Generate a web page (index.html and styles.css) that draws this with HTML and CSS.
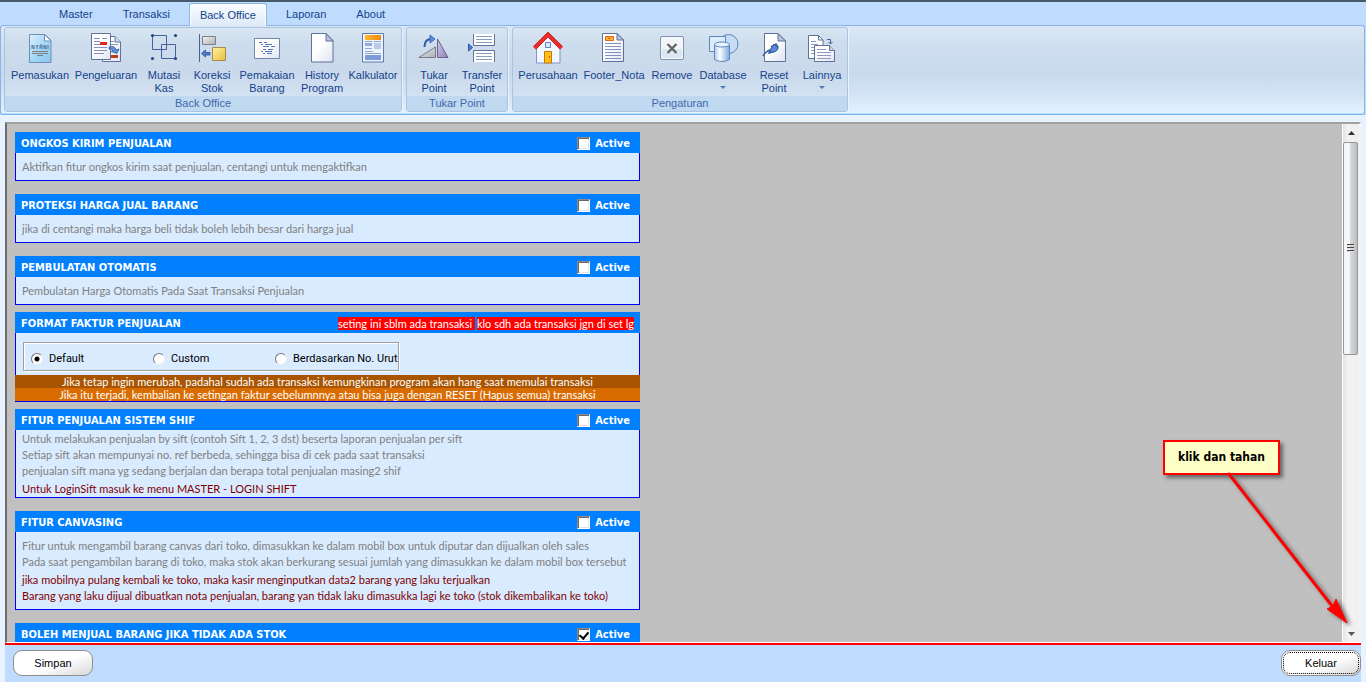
FILE: index.html
```html
<!DOCTYPE html>
<html lang="id">
<head>
<meta charset="utf-8">
<title>Back Office</title>
<link rel="stylesheet" href="styles.css">
</head>
<body>
<svg class="defs" width="0" height="0" aria-hidden="true">
  <defs>
    <linearGradient id="paper" x1="0" y1="0" x2="1" y2="1"><stop offset="0.4" stop-color="#fff"/><stop offset="1" stop-color="#dfe4f3"/></linearGradient>
    <linearGradient id="sky" x1="0" y1="0" x2="1" y2="1"><stop offset="0" stop-color="#dff1ff"/><stop offset="0.5" stop-color="#a5d8f8"/><stop offset="1" stop-color="#8cc4ee"/></linearGradient>
    <linearGradient id="gold" x1="0" y1="0" x2="1" y2="1"><stop offset="0" stop-color="#fff3a0"/><stop offset="1" stop-color="#e6bd3a"/></linearGradient>
    <linearGradient id="orange" x1="0" y1="0" x2="1" y2="0"><stop offset="0" stop-color="#ffb52e"/><stop offset="1" stop-color="#ee8a10"/></linearGradient>
    <linearGradient id="silver" x1="0" y1="0" x2="1" y2="1"><stop offset="0" stop-color="#f4f4f4"/><stop offset="1" stop-color="#a9adb3"/></linearGradient>
    <linearGradient id="violet" x1="0" y1="0" x2="1" y2="1"><stop offset="0" stop-color="#d6cdea"/><stop offset="1" stop-color="#8e80b4"/></linearGradient>
    <linearGradient id="tube" x1="0" y1="0" x2="1" y2="0"><stop offset="0" stop-color="#a8cdf2"/><stop offset="0.35" stop-color="#fff"/><stop offset="1" stop-color="#7ba9dd"/></linearGradient>
  </defs>
</svg>

<header class="ribbon">
  <nav class="tabs">
    <button class="tab">Master</button>
    <button class="tab">Transaksi</button>
    <button class="tab tab-active">Back Office</button>
    <button class="tab">Laporan</button>
    <button class="tab">About</button>
  </nav>
  <div class="groups">
    <section class="group">
      <div class="tools">
        <button class="tool w-l">
          <svg class="icon" viewBox="0 0 32 32"><path d="M5.500 2.500H21l6 6V30.500H5.500z" fill="url(#sky)" stroke="#6e8fb4"/><path d="M20.500 2.500v6.500h6.500z" fill="#fff" stroke="#6e8fb4"/><path d="M8 17v-4l2 4v-4m2 0 1 2 1-2m-1 2v2m3 0v-4h2v2h-2m2 0v2m2 0v-4l2 4v-4m2 0v4" fill="none" stroke="#567a9c"/><path d="M8 19.500h16M8 21.500h16M13 23.500h6" stroke="#7d7a80"/></svg>
          <span>Pemasukan</span></button>
        <button class="tool w-xl">
          <svg class="icon" viewBox="0 0 32 32"><path d="M12.500 4.500H25l5.500 5.500v19.500h-18z" fill="url(#paper)" stroke="#60719a"/><path d="M25 4.500V10h5.500" fill="#d5dcf0" stroke="#60719a"/><path d="M21 9.500h3M21 12.500h7" stroke="#8c97b8"/><path d="M21 23h7v3h-7z" fill="#c43c12"/><path d="M1.500 1.500h19v26h-19z" fill="url(#paper)" stroke="#60719a"/><path d="M4 6.500h6M12 6.500h5M4 9.500h6M4 12.500h6M4 15.500h13M4 18.500h13M4 21.500h10" stroke="#8390bd"/><path d="M10 10h7v3h-7z" fill="#e2281c"/><path d="M19 15q6-2 7 3l3-1-2 4.500-6-2 2-.5q-1-2-4-2z" fill="#5d8fdc" stroke="#28549c" stroke-width=".7"/></svg>
          <span>Pengeluaran</span></button>
        <button class="tool w-s">
          <svg class="icon" viewBox="0 0 32 32"><path d="M4.500 3.500h14v14h-14zM13.500 12.500h14v14h-14z" fill="none" stroke="#46629a"/><g fill="#24478c"><circle cx="4.500" cy="3.500" r="1.600"/><circle cx="27.500" cy="3.500" r="1.600"/><circle cx="4.500" cy="26.500" r="1.600"/><circle cx="27.500" cy="26.500" r="1.600"/></g></svg>
          <span>Mutasi<br>Kas</span></button>
        <button class="tool w-s">
          <svg class="icon" viewBox="0 0 32 32"><path d="M3.500 2v28" stroke="#46629a"/><path d="M6.500 4.500h13v8h-13z" fill="url(#silver)" stroke="#7a7d84"/><path d="M16.500 15.500h13v13h-13z" fill="url(#gold)" stroke="#a88a4a"/><path d="m5.500 21.500 4-3.500v2.500h4.500v2.500H9.500V25z" fill="#4a7fd0" stroke="#2a4f98" stroke-width=".8"/></svg>
          <span>Koreksi<br>Stok</span></button>
        <button class="tool w-m">
          <svg class="icon" viewBox="0 0 32 32"><path d="M3.500 6.500h25v20h-25z" fill="url(#paper)" stroke="#7386ac"/><path d="M8 10.500h3M13 10.500h3M10 12.500h2M14 12.500h7M12 14.500h6M20 14.500h4M12 17.500h3M17 17.500h5M10 19.500h2M14 19.500h7M12 21.500h2M16 21.500h5" stroke="#5677a8"/></svg>
          <span>Pemakaian<br>Barang</span></button>
        <button class="tool w-s">
          <svg class="icon" viewBox="0 0 32 32"><path d="M5.500 1.500H20l7 7v21.500H5.500z" fill="url(#paper)" stroke="#60719a"/><path d="M20 1.500V9h7z" fill="#b9c3df" stroke="#60719a"/></svg>
          <span>History<br>Program</span></button>
        <button class="tool w-d">
          <svg class="icon" viewBox="0 0 32 32"><path d="M5.500 1.500h21v28.500h-21z" fill="#eef2fb" stroke="#5f79b0"/><path d="M8 3h16v5H8z" fill="url(#orange)"/><path d="M8 9.500h7M17 9.500h7M8 19.500h8M8 21.500h16" stroke="#8fa6d2"/><path d="M8 11h7v3H8z" fill="#93abd9"/><path d="M17 11h7v6h-7z" fill="#b9caeb"/><path d="M8 16.500h7" stroke="#91a9da"/><path d="M8 23h16v5H8z" fill="#7b9cda"/></svg>
          <span>Kalkulator</span></button>
      </div>
      <h2 class="group-title">Back Office</h2>
    </section>
    <section class="group">
      <div class="tools">
        <button class="tool w-s">
          <svg class="icon" viewBox="0 0 32 32"><path d="M.8 25.500 17.500 15v10.500z" fill="url(#silver)" stroke="#777c88"/><path d="M19.500 7v18.500H30z" fill="url(#violet)" stroke="#6c648e"/><path d="M6.500 15q0-8 7-8" fill="none" stroke="#2d5aa8" stroke-width="2"/><path d="m12 3 5 4-5 4z" fill="#5b90df" stroke="#2d5aa8" stroke-width=".8"/></svg>
          <span>Tukar<br>Point</span></button>
        <button class="tool w-s">
          <svg class="icon" viewBox="0 0 32 32"><path d="M7.500 2v11.500h21V2M7.500 30V18.500h21V30" fill="#fff" stroke="#62729a"/><path d="M10 4.500h16M10 7.500h16M10 10.500h16M10 21.500h16M10 24.500h16M10 27.500h16" stroke="#8d9ac6"/><path d="m2.500 12 4 3.500-4 3.500z" fill="#4c83dc" stroke="#2b539e"/></svg>
          <span>Transfer<br>Point</span></button>
      </div>
      <h2 class="group-title">Tukar Point</h2>
    </section>
    <section class="group">
      <div class="tools">
        <button class="tool w-l">
          <svg class="icon" viewBox="0 0 32 32"><path d="M4.500 31V16L16 4l12 12v15z" fill="#f3f7ff" stroke="#7f95cf"/><path d="M2.500 16 16 2.500 29.500 16" fill="none" stroke="#b81212" stroke-width="4"/><path d="M2.500 16 16 2.500 29.500 16" fill="none" stroke="#f22b26" stroke-width="2.600"/><path d="M13.500 10.500h5v5h-5z" fill="#dce9fc" stroke="#6680bd"/><path d="M12.500 19.500h7V31h-7z" fill="#ffbd16" stroke="#c77908"/><path d="M17.500 24v2" stroke="#a45d00"/></svg>
          <span>Perusahaan</span></button>
        <button class="tool w-xl">
          <svg class="icon" viewBox="0 0 32 32"><path d="M4.500 1.500H19l6.500 6.500v21.500h-21z" fill="url(#paper)" stroke="#60719a"/><path d="M19 1.500V8h6.500z" fill="#b9c3df" stroke="#60719a"/><path d="M7.500 4.500h8v4h-8z" fill="#ffb23c" stroke="#da6a10"/><path d="M10 6.500h3" stroke="#da6a10"/><path d="M7 11.500h16M7 14.500h16M7 17.500h16M7 20.500h16M7 23.500h16M7 26.500h16" stroke="#8390c3"/></svg>
          <span>Footer_Nota</span></button>
        <button class="tool w-s">
          <svg class="icon" viewBox="0 0 32 32"><rect x="4.500" y="4.500" width="23" height="23" rx="1.500" fill="#f2f6fb" stroke="#8492aa"/><path d="M6 17h20v9H6z" fill="#dce7f4"/><path d="m11.500 12 9 9m0-9-9 9" stroke="#666" stroke-width="2.400"/></svg>
          <span>Remove</span></button>
        <button class="tool w-d">
          <svg class="icon" viewBox="0 0 32 32"><circle cx="21.500" cy="12" r="9.500" fill="#c4dcf5" stroke="#5f86bd"/><path d="M2.500 4.500h16v15h-16z" fill="#dcecfb" stroke="#5f86bd"/><path d="M7.500 12.500v15q7.500 4 15 0v-15z" fill="url(#tube)" stroke="#5f86bd"/><ellipse cx="15" cy="12.500" rx="7.500" ry="2.500" fill="#e7f3ff" stroke="#5f86bd"/></svg>
          <span>Database</span><i class="drop"></i></button>
        <button class="tool w-s">
          <svg class="icon" viewBox="0 0 32 32"><path d="M6.500 1.500H20l7.500 7.500v20.500h-21z" fill="url(#paper)" stroke="#60719a"/><path d="M20 1.500V9h7.500z" fill="#b9c3df" stroke="#60719a"/><path d="M5 24q3-5 7-6l-1 3q5-1 9-6l-2-3-5 3" fill="none" stroke="#38619f" stroke-width="1.500"/><path d="m12 18 4-6 4 4q-1 5-8 4z" fill="#5a8bd5" stroke="#32599a"/></svg>
          <span>Reset<br>Point</span></button>
        <button class="tool w-s">
          <svg class="icon" viewBox="0 0 32 32"><path d="M2.500 3.500h10l4.500 4.500v18.500h-14.500z" fill="#fff" stroke="#60719a"/><path d="M12.500 3.500V8H17" fill="none" stroke="#60719a"/><path d="M5 9.500h5M5 12.500h7M5 15.500h3M5 18.500h3M5 21.500h3" stroke="#8d99c3"/><path d="M8.500 13.500h15l5 5v11h-20z" fill="url(#paper)" stroke="#60719a"/><path d="M23.500 13.500v5h5" fill="#cfd6ea" stroke="#60719a"/><path d="M11 17.500h9M11 20.500h14M11 23.500h14M11 26.500h14" stroke="#8d99c3"/><path d="M21 7.500h3.500v4m-2-1.500 2 2 2-2" fill="none" stroke="#4a5f8e"/></svg>
          <span>Lainnya</span><i class="drop"></i></button>
      </div>
      <h2 class="group-title">Pengaturan</h2>
    </section>
  </div>
</header>

<main class="workspace">
  <div class="panel">
    <div class="cards">
      <section class="card">
        <div class="card-head"><h3>ONGKOS KIRIM PENJUALAN</h3><label class="active"><input type="checkbox">Active</label></div>
        <div class="card-body roomy"><p>Aktifkan fitur ongkos kirim saat penjualan, centangi untuk mengaktifkan</p></div>
      </section>
      <section class="card">
        <div class="card-head"><h3>PROTEKSI HARGA JUAL BARANG</h3><label class="active"><input type="checkbox">Active</label></div>
        <div class="card-body roomy"><p>jika di centangi maka harga beli tidak boleh lebih besar dari harga jual</p></div>
      </section>
      <section class="card snug">
        <div class="card-head"><h3>PEMBULATAN OTOMATIS</h3><label class="active"><input type="checkbox">Active</label></div>
        <div class="card-body roomy"><p>Pembulatan Harga Otomatis Pada Saat Transaksi Penjualan</p></div>
      </section>
      <section class="card snug">
        <div class="card-head"><h3>FORMAT FAKTUR PENJUALAN</h3><div class="alerts"><mark>seting ini sblm ada transaksi&nbsp;</mark><mark>klo sdh ada transaksi jgn di set lg</mark></div></div>
        <div class="card-body format">
          <fieldset class="choices">
            <label><input type="radio" name="format" checked>Default</label>
            <label><input type="radio" name="format">Custom</label>
            <label><input type="radio" name="format">Berdasarkan No. Urut</label>
          </fieldset>
          <p class="warn warn-dark">Jika tetap ingin merubah, padahal sudah ada transaksi kemungkinan program akan hang saat memulai transaksi</p>
          <p class="warn">Jika itu terjadi, kembalian ke setingan faktur sebelumnnya atau bisa juga dengan RESET (Hapus semua) transaksi</p>
        </div>
      </section>
      <section class="card">
        <div class="card-head"><h3>FITUR PENJUALAN SISTEM SHIF</h3><label class="active"><input type="checkbox">Active</label></div>
        <div class="card-body">
          <p>Untuk melakukan penjualan by sift (contoh Sift 1, 2, 3 dst) beserta laporan penjualan per sift</p>
          <p>Setiap sift akan mempunyai no. ref berbeda, sehingga bisa di cek pada saat transaksi</p>
          <p>penjualan sift mana yg sedang berjalan dan berapa total penjualan masing2 shif</p>
          <div class="note"><p>Untuk LoginSift masuk ke menu MASTER - LOGIN SHIFT</p></div>
        </div>
      </section>
      <section class="card">
        <div class="card-head"><h3>FITUR CANVASING</h3><label class="active"><input type="checkbox">Active</label></div>
        <div class="card-body roomy">
          <p>Fitur untuk mengambil barang canvas dari toko, dimasukkan ke dalam mobil box untuk diputar dan dijualkan oleh sales</p>
          <p>Pada saat pengambilan barang di toko, maka stok akan berkurang sesuai jumlah yang dimasukkan ke dalam mobil box tersebut</p>
          <div class="note"><p>jika mobilnya pulang kembali ke toko, maka kasir menginputkan data2 barang yang laku terjualkan</p>
          <p>Barang yang laku dijual dibuatkan nota penjualan, barang yan tidak laku dimasukka lagi ke toko (stok dikembalikan ke toko)</p></div>
        </div>
      </section>
      <section class="card">
        <div class="card-head"><h3>BOLEH MENJUAL BARANG JIKA TIDAK ADA STOK</h3><label class="active"><input type="checkbox" checked>Active</label></div>
        <div class="card-body roomy"></div>
      </section>
    </div>
    <div class="scrollbar">
      <button class="step" aria-label="Scroll up"><svg width="7" height="4" viewBox="0 0 7 4"><path d="M0 4 3.500 0 7 4z" fill="#333"/></svg></button>
      <div class="track"><div class="thumb"><i></i><i></i><i></i></div></div>
      <button class="step" aria-label="Scroll down"><svg width="7" height="4" viewBox="0 0 7 4"><path d="M0 0h7L3.500 4z" fill="#555"/></svg></button>
    </div>
  </div>
  <div class="callout">klik dan tahan</div>
  <svg class="arrow" width="130" height="160" viewBox="0 0 130 160" aria-hidden="true"><path d="M3 3 110 140" stroke="red" stroke-width="3" stroke-linecap="round"/><path d="m121 152-20-14 6-3 3-7z" fill="red" stroke="red"/></svg>
</main>

<footer class="actions">
  <button class="pill">Simpan</button>
  <button class="pill pill-focus">Keluar</button>
</footer>
</body>
</html>
```
FILE: styles.css
```css
* { box-sizing: border-box; }

body {
  margin: 0;
  height: 100vh;
  display: flex;
  flex-direction: column;
  overflow: hidden;
  background: #e8f3ff;
  font: 11px/16px "Liberation Sans", Arial, sans-serif;
}

.defs { position: absolute; }
h2, h3, p { margin: 0; font: inherit; }
button { margin: 0; padding: 0; border: 0; background: none; font: inherit; color: inherit; }

/* Ribbon */
.ribbon {
  flex: none;
  border-top: 2px solid #45586c;
  background: #bfdcff;
  color: #15428b;
  line-height: 13px;
}

.tabs {
  display: flex;
  height: 23px;
  padding-left: 44px;
}

.tab { padding: 1px 15px 0; }

.tab-active {
  position: relative;
  margin: 1px 4px -1px;
  padding: 0 10px;
  border: 1px solid #8db2e3;
  border-bottom: 0;
  border-radius: 3px 3px 0 0;
  background: linear-gradient(#fafdff, #dce9f7);
  box-shadow: inset 1px 1px #fff, inset -1px 0 #fff;
}

.groups {
  display: flex;
  gap: 4px;
  margin-right: 1px;
  padding: 1px 3px 2px;
  border: 1px solid #8db2e3;
  border-radius: 3px;
  border-bottom-color: #7fb0ee;
  background: linear-gradient(#dbe7f5 0, #cfdff0 20px, #c9daee 55%, #d5e5f7 80%, #e4f2ff);
  box-shadow: inset 0 -1px #b4e4ff;
}

.group {
  border: 1px solid #a9c5e4;
  border-radius: 3px;
  background: linear-gradient(#d9e5f2 0, #cddded 15px, #c9d9eb 45px, #d9e8f7);
  box-shadow: 1px 1px #eaf4ff;
}

.tools {
  display: flex;
  height: 68px;
  padding: 4px 1px 0 3px;
}

.tool {
  display: flex;
  flex-direction: column;
  align-items: center;
  text-align: center;
  white-space: nowrap;
}

.w-s { width: 48px; }
.w-d { width: 54px; }
.w-m { width: 62px; }
.w-l { width: 64px; }
.w-xl { width: 68px; }

.icon {
  width: 32px;
  height: 32px;
  margin-bottom: 5px;
}

.drop {
  margin-top: 4px;
  border: 3px solid transparent;
  border-top-color: #5379b5;
}

.group-title {
  height: 15px;
  background: #c1d8f1;
  color: #3e6aaa;
  line-height: 15px;
  text-align: center;
}

/* Settings panel */
.workspace {
  position: relative;
  flex: 1;
  min-height: 0;
  margin: 7px 5px 0;
  border-bottom: 2px solid red;
}

.panel {
  display: flex;
  height: 100%;
  border: 2px solid;
  border-color: #a0a0a0 #f4f4f4 #fff #6d6d6d;
  border-bottom-width: 1px;
  background: #c0c0c0;
}

.cards {
  flex: 1;
  overflow: hidden;
  padding: 8px;
  font-family: Lato, sans-serif;
}

.card {
  max-width: 625px;
  margin-bottom: 13px;
}

.snug { margin-bottom: 7px; }

.card-head {
  display: flex;
  justify-content: space-between;
  align-items: center;
  height: 21px;
  padding: 2px 6px 0;
  background: #0080ff;
  color: #fff;
}

.card-head h3,
.active {
  font-family: "DejaVu Sans Condensed", "DejaVu Sans", sans-serif;
  font-weight: bold;
}

.active {
  display: flex;
  align-items: center;
  gap: 5px;
  padding-right: 4px;
}

.active input {
  appearance: none;
  width: 13px;
  height: 13px;
  margin: 0;
  border: 1px solid;
  border-color: #8a8a8a #fff #fff #8a8a8a;
  background: #fff;
  box-shadow: inset 1px 1px #696969, inset -1px -1px #e3e3e3;
}

.active input:checked::after {
  content: "";
  display: block;
  width: 4px;
  height: 7px;
  margin: 1px 0 0 3px;
  border: solid #000;
  border-width: 0 2px 2px 0;
  transform: rotate(40deg);
}

.card-body {
  padding: 1px 6px 0;
  border: 1px solid #00f;
  border-top: 0;
  background: #d9ebff;
  color: #808080;
  white-space: nowrap;
}

.roomy { padding: 6px 6px 5px; }

.note {
  padding-top: 2px;
  color: #800000;
}

.alerts {
  display: flex;
  gap: 2px;
}

.alerts mark {
  background: red;
  color: #fff;
  line-height: 13px;
}

.format { padding: 9px 0 0; }

.choices {
  display: grid;
  grid-template-columns: 122px 122px auto;
  width: 376px;
  height: 29px;
  margin: 0 7px 4px;
  padding: 4px 0 0 7px;
  border: 1px solid #a0a0a0;
  box-shadow: inset 1px 1px #fff, 1px 1px #fff;
  color: #000;
  font-family: Roboto, sans-serif;
}

.choices label {
  display: flex;
  align-items: center;
  gap: 6px;
}

.choices input {
  appearance: none;
  width: 12px;
  height: 12px;
  margin: 0;
  border: 1px solid;
  border-color: #777 #eee #eee #777;
  border-radius: 50%;
  background: #fff;
}

.choices input:checked { background: radial-gradient(circle, #000 2px, #fff 3px); }

.warn {
  margin: 0 -1px;
  background: #d96c00;
  color: #fff;
  line-height: 13px;
  text-align: center;
}

.warn-dark { background: #a85400; }

/* Scrollbar */
.scrollbar {
  display: flex;
  flex-direction: column;
  width: 17px;
  border-left: 1px solid #fff;
  background: linear-gradient(90deg, #e4e4e4, #f2f2f2 30%, #f0f0f0);
}

.step {
  height: 17px;
  display: grid;
  place-items: center;
}

.track { flex: 1; }

.thumb {
  display: flex;
  flex-direction: column;
  align-items: center;
  justify-content: center;
  gap: 1px;
  height: 44%;
  margin: 1px 1px 1px 0;
  border: 1px solid #979797;
  border-radius: 2px;
  background: linear-gradient(90deg, #f6f6f6 45%, #d6d9dc 50%, #b9bcc1);
}

.thumb i {
  width: 7px;
  height: 2px;
  background: linear-gradient(#444 50%, #ddd 50%);
}

/* Annotation */
.callout {
  position: absolute;
  right: 81px;
  bottom: 168px;
  width: 117px;
  padding: 7px 0 8px;
  border: 2px solid red;
  background: #ffffc8;
  box-shadow: 3px 3px 4px #666;
  color: #000;
  font: bold 12px/16px "DejaVu Sans Condensed", "DejaVu Sans", sans-serif;
  text-align: center;
}

.arrow {
  position: absolute;
  right: 5px;
  bottom: 12px;
  filter: drop-shadow(3px 2px 2px #666);
}

/* Bottom bar */
.actions {
  flex: none;
  display: flex;
  justify-content: space-between;
  height: 37px;
  margin: 0 5px;
  padding: 5px 0 0 8px;
  background: #bfdcff;
}

.pill {
  width: 80px;
  height: 26px;
  border: 1px solid #8e8e8e;
  border-radius: 9px;
  background: linear-gradient(160deg, #fff 55%, #d6d6d6);
  color: #000;
}

.pill-focus {
  outline: 1px dotted #000;
  outline-offset: -3px;
}
```
